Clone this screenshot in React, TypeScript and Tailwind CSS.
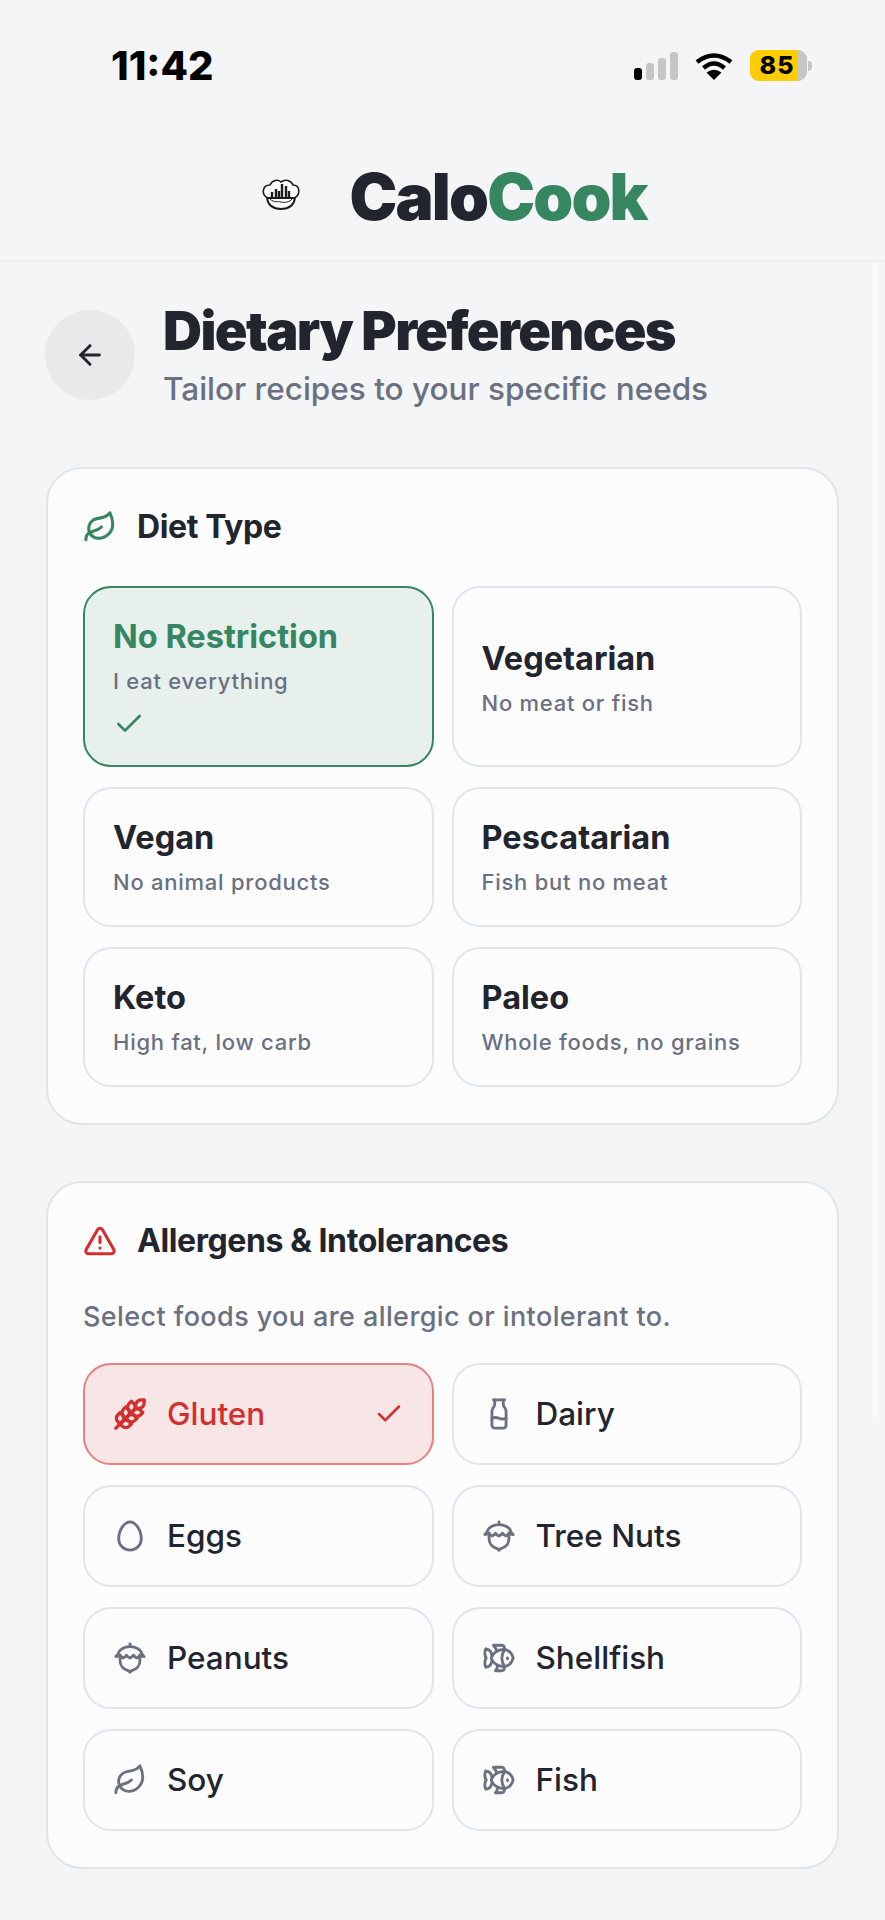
import {
  ArrowLeft,
  Check,
  Egg,
  Fish,
  Leaf,
  Milk,
  Nut,
  TriangleAlert,
  Wheat,
  type LucideIcon,
} from 'lucide-react';

const DIET_TYPES = [
  { name: 'No Restriction', note: 'I eat everything', selected: true, tall: true },
  { name: 'Vegetarian', note: 'No meat or fish', tall: true },
  { name: 'Vegan', note: 'No animal products' },
  { name: 'Pescatarian', note: 'Fish but no meat' },
  { name: 'Keto', note: 'High fat, low carb' },
  { name: 'Paleo', note: 'Whole foods, no grains' },
];

const ALLERGENS: { name: string; icon: LucideIcon; selected?: boolean }[] = [
  { name: 'Gluten', icon: Wheat, selected: true },
  { name: 'Dairy', icon: Milk },
  { name: 'Eggs', icon: Egg },
  { name: 'Tree Nuts', icon: Nut },
  { name: 'Peanuts', icon: Nut },
  { name: 'Shellfish', icon: Fish },
  { name: 'Soy', icon: Leaf },
  { name: 'Fish', icon: Fish },
];

function StatusBar() {
  return (
    <div className="flex h-[132px] items-start justify-between pl-[111px] pr-[73px] pt-[43px]">
      <span className="text-[40px] font-extrabold leading-[46px] text-black">11:42</span>
      <div className="flex items-center gap-[17px] pt-[7px]">
        <div className="flex items-end gap-[4px]">
          <span className="h-[12px] w-[8px] rounded-[3px] bg-black" />
          <span className="h-[17px] w-[8px] rounded-[3px] bg-[#c4c6c8]" />
          <span className="h-[22px] w-[8px] rounded-[3px] bg-[#c4c6c8]" />
          <span className="h-[28px] w-[8px] rounded-[3px] bg-[#c4c6c8]" />
        </div>
        <svg width="38" height="28" viewBox="0 0 38 28" fill="none" stroke="black" strokeWidth="4.5">
          <path d="M2 10 Q19 -3 36 10" />
          <path d="M8.5 16 Q19 7 29.5 16" />
          <path d="M19 28 L11.5 20.5 Q19 15 26.5 20.5 Z" fill="black" stroke="none" />
        </svg>
        <div className="flex items-center gap-[1px]">
          <div className="flex h-[31px] w-[57px] overflow-hidden rounded-[9px] bg-[#c4c6c8]">
            <span className="flex w-[48px] items-center justify-center pl-[6px] bg-[#ffcc00] text-[25px] font-extrabold leading-none tracking-[1px] text-black">
              85
            </span>
          </div>
          <span className="h-[10px] w-[4px] rounded-r-full bg-[#c4c6c8]" />
        </div>
      </div>
    </div>
  );
}

function ChefLogo() {
  return (
    <svg width="38" height="31" viewBox="0 0 38 31" fill="none" stroke="#1c1c1c" strokeWidth="1.6">
      <path
        d="M6 19 C-1 16 0 6 8 6 C10 1 16 0 19 3 C23 0 29 1 31 6 C38 6 39 16 32 19"
        fill="white"
      />
      <path d="M10 19 V13 M14 19 V10 M17 19 V12 M20 19 V5 M24 19 V7 M27 19 V12" strokeWidth="2.4" />
      <path d="M5 19 H33 C32 26 28 30 19 30 C10 30 6 26 5 19 Z" fill="white" strokeWidth="1.8" />
      <path d="M8 20 C12 24 16 22 19 23 C23 24 28 23 30 20" strokeWidth="1" />
    </svg>
  );
}

function Section({
  icon: Icon,
  iconColor,
  title,
  children,
}: {
  icon: LucideIcon;
  iconColor: string;
  title: string;
  children: React.ReactNode;
}) {
  return (
    <section className="rounded-[36px] border-2 border-[#e3e4e8] bg-[#fcfcfd] px-[35px] pb-[36px] pt-[35px]">
      <div className="flex h-[46px] items-center gap-[20px]">
        <Icon size={34} strokeWidth={2.2} className={iconColor} />
        <h2 className="text-[32px] font-bold tracking-[-0.4px] text-[#22242e]">{title}</h2>
      </div>
      {children}
    </section>
  );
}

export default function App() {
  return (
    <main className="relative min-h-[1920px] bg-[#f4f5f7] font-['Inter',sans-serif]">
      {/* faint scrollbar thumb captured in the screenshot */}
      <div className="absolute left-[872px] top-[262px] h-[1156px] w-[6px] rounded-b-full bg-[#f8f9fa]" />

      <header className="border-b-2 border-[#eeeff2]">
        <StatusBar />
        <div className="flex h-[128px] items-start justify-center gap-[49px] pl-[24px] pt-[27px]">
          <div className="pt-[20px]">
            <ChefLogo />
          </div>
          <h1 className="text-[64px] font-black leading-[76px] tracking-[-1.8px] text-[#22242e]">
            Calo<span className="text-[#358661]">Cook</span>
          </h1>
        </div>
      </header>

      <div className="relative px-[46px] pt-[39px]">
        <div className="flex items-center gap-[28px]">
          <button className="-ml-[1px] flex h-[90px] w-[90px] items-center justify-center rounded-full bg-[#e8e9eb] text-[#22242e]">
            <ArrowLeft size={32} strokeWidth={2.2} />
          </button>
          <div>
            <h2 className="text-[54px] font-black leading-[60px] tracking-[-1.6px] text-[#22242e]">
              Dietary Preferences
            </h2>
            <p className="mt-[8px] text-[31.5px] font-medium leading-[40px] text-[#6b7080]">
              Tailor recipes to your specific needs
            </p>
          </div>
        </div>

        <div className="mt-[58px] flex flex-col gap-[56px]">
          <Section icon={Leaf} iconColor="text-[#358661]" title="Diet Type">
            <div className="mt-[36px] grid grid-cols-2 gap-x-[18px] gap-y-[20px]">
              {DIET_TYPES.map((diet) => (
                <div
                  key={diet.name}
                  className={`flex flex-col justify-center rounded-[28px] border-2 px-[28px] ${
                    diet.tall ? 'h-[181px] pt-[4px]' : 'h-[140px]'
                  } ${diet.selected ? 'border-[#358661] bg-[#e7f0ec]' : 'border-[#e3e4e8] bg-[#fcfcfd]'}`}
                >
                  <div
                    className={`text-[32.5px] font-bold leading-[38px] ${
                      diet.selected ? 'text-[#358661]' : 'text-[#22242e]'
                    }`}
                  >
                    {diet.name}
                  </div>
                  <div className="mt-[11px] text-[22px] font-medium leading-[28px] tracking-[0.75px] text-[#6b7080]">
                    {diet.note}
                  </div>
                  {diet.selected && <Check size={32} strokeWidth={2} className="mt-[13px] text-[#358661]" />}
                </div>
              ))}
            </div>
          </Section>

          <Section icon={TriangleAlert} iconColor="text-[#d32f2f]" title="Allergens & Intolerances">
            <p className="mt-[35px] text-[27px] font-medium leading-[36px] tracking-[0.4px] text-[#6b7080]">
              Select foods you are allergic or intolerant to.
            </p>
            <div className="mt-[28px] grid grid-cols-2 gap-x-[18px] gap-y-[20px]">
              {ALLERGENS.map(({ name, icon: Icon, selected }) => (
                <div
                  key={name}
                  className={`flex h-[102px] items-center gap-[20px] rounded-[28px] border-2 px-[28px] ${
                    selected ? 'border-[#e88080] bg-[#f8e6e6]' : 'border-[#e3e4e8] bg-[#fcfcfd]'
                  }`}
                >
                  <Icon
                    size={34}
                    strokeWidth={selected ? 2.4 : 2}
                    className={selected ? 'text-[#d32f2f]' : 'text-[#6b7080]'}
                  />
                  <span
                    className={`text-[31.5px] font-medium ${selected ? 'text-[#d32f2f]' : 'text-[#22242e]'}`}
                  >
                    {name}
                  </span>
                  {selected && <Check size={30} strokeWidth={2} className="ml-auto text-[#d32f2f]" />}
                </div>
              ))}
            </div>
          </Section>
        </div>
      </div>
    </main>
  );
}
